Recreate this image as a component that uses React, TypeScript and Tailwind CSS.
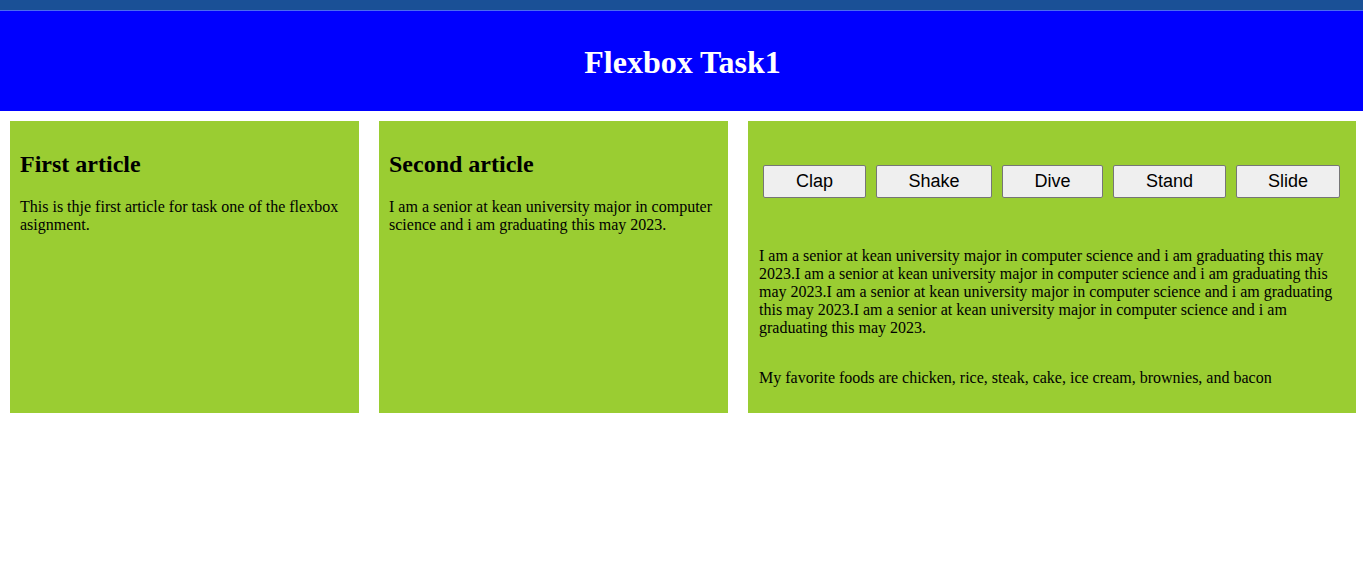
import React from "react";

const buttons = [
  { label: "Clap", w: "w-[103px]" },
  { label: "Shake", w: "w-[116px]" },
  { label: "Dive", w: "w-[101px]" },
  { label: "Stand", w: "w-[113px]" },
  { label: "Slide", w: "w-[104px]" },
];

const para =
  "I am a senior at kean university major in computer science and i am graduating this may 2023.";

export default function App() {
  return (
    <div className="w-[1363px] h-[587px] bg-white text-black font-['Liberation_Serif',serif] overflow-hidden">
      <div className="h-[10px] bg-[#1a5096]" />
      <div className="h-px bg-[#4a6cf0]" />
      <header className="h-[100px] bg-[#0000ff] flex items-center justify-center">
        <h1 className="text-[32px] font-bold text-white leading-none mt-[2px] ml-[2px]">Flexbox Task1</h1>
      </header>
      <main className="flex items-stretch mt-[10px] pl-[10px]">
        <article className="w-[349px] bg-[#9acd32] p-[10px]">
          <h2 className="text-[24px] font-bold leading-[28px] mt-[19px] mb-[20px]">First article</h2>
          <p className="text-[16px] leading-[18px]">
            This is thje first article for task one of the flexbox asignment.
          </p>
        </article>
        <article className="w-[349px] ml-[20px] bg-[#9acd32] p-[10px]">
          <h2 className="text-[24px] font-bold leading-[28px] mt-[19px] mb-[20px]">Second article</h2>
          <p className="text-[16px] leading-[18px]">
            I am a senior at kean university major in computer science and i am graduating this may 2023.
          </p>
        </article>
        <article className="w-[608px] ml-[20px] bg-[#9acd32] px-[10px] pt-[10px] pb-[10px]">
          <div className="flex gap-[10px] mt-[34px] pl-[5px]">
            {buttons.map((b) => (
              <button
                key={b.label}
                className={`${b.w} h-[33px] bg-[#efefef] border border-[#767676] rounded-[2px] text-[18px] font-['Liberation_Sans',Arial,sans-serif] text-black`}
              >
                {b.label}
              </button>
            ))}
          </div>
          <p className="text-[16px] leading-[18px] mt-[49px] pl-px">
            {para}
            {para}
            {para}
            {para}
          </p>
          <p className="text-[16px] leading-[18px] mt-[32px] mb-[16px] pl-px">
            My favorite foods are chicken, rice, steak, cake, ice cream, brownies, and bacon
          </p>
        </article>
      </main>
    </div>
  );
}
